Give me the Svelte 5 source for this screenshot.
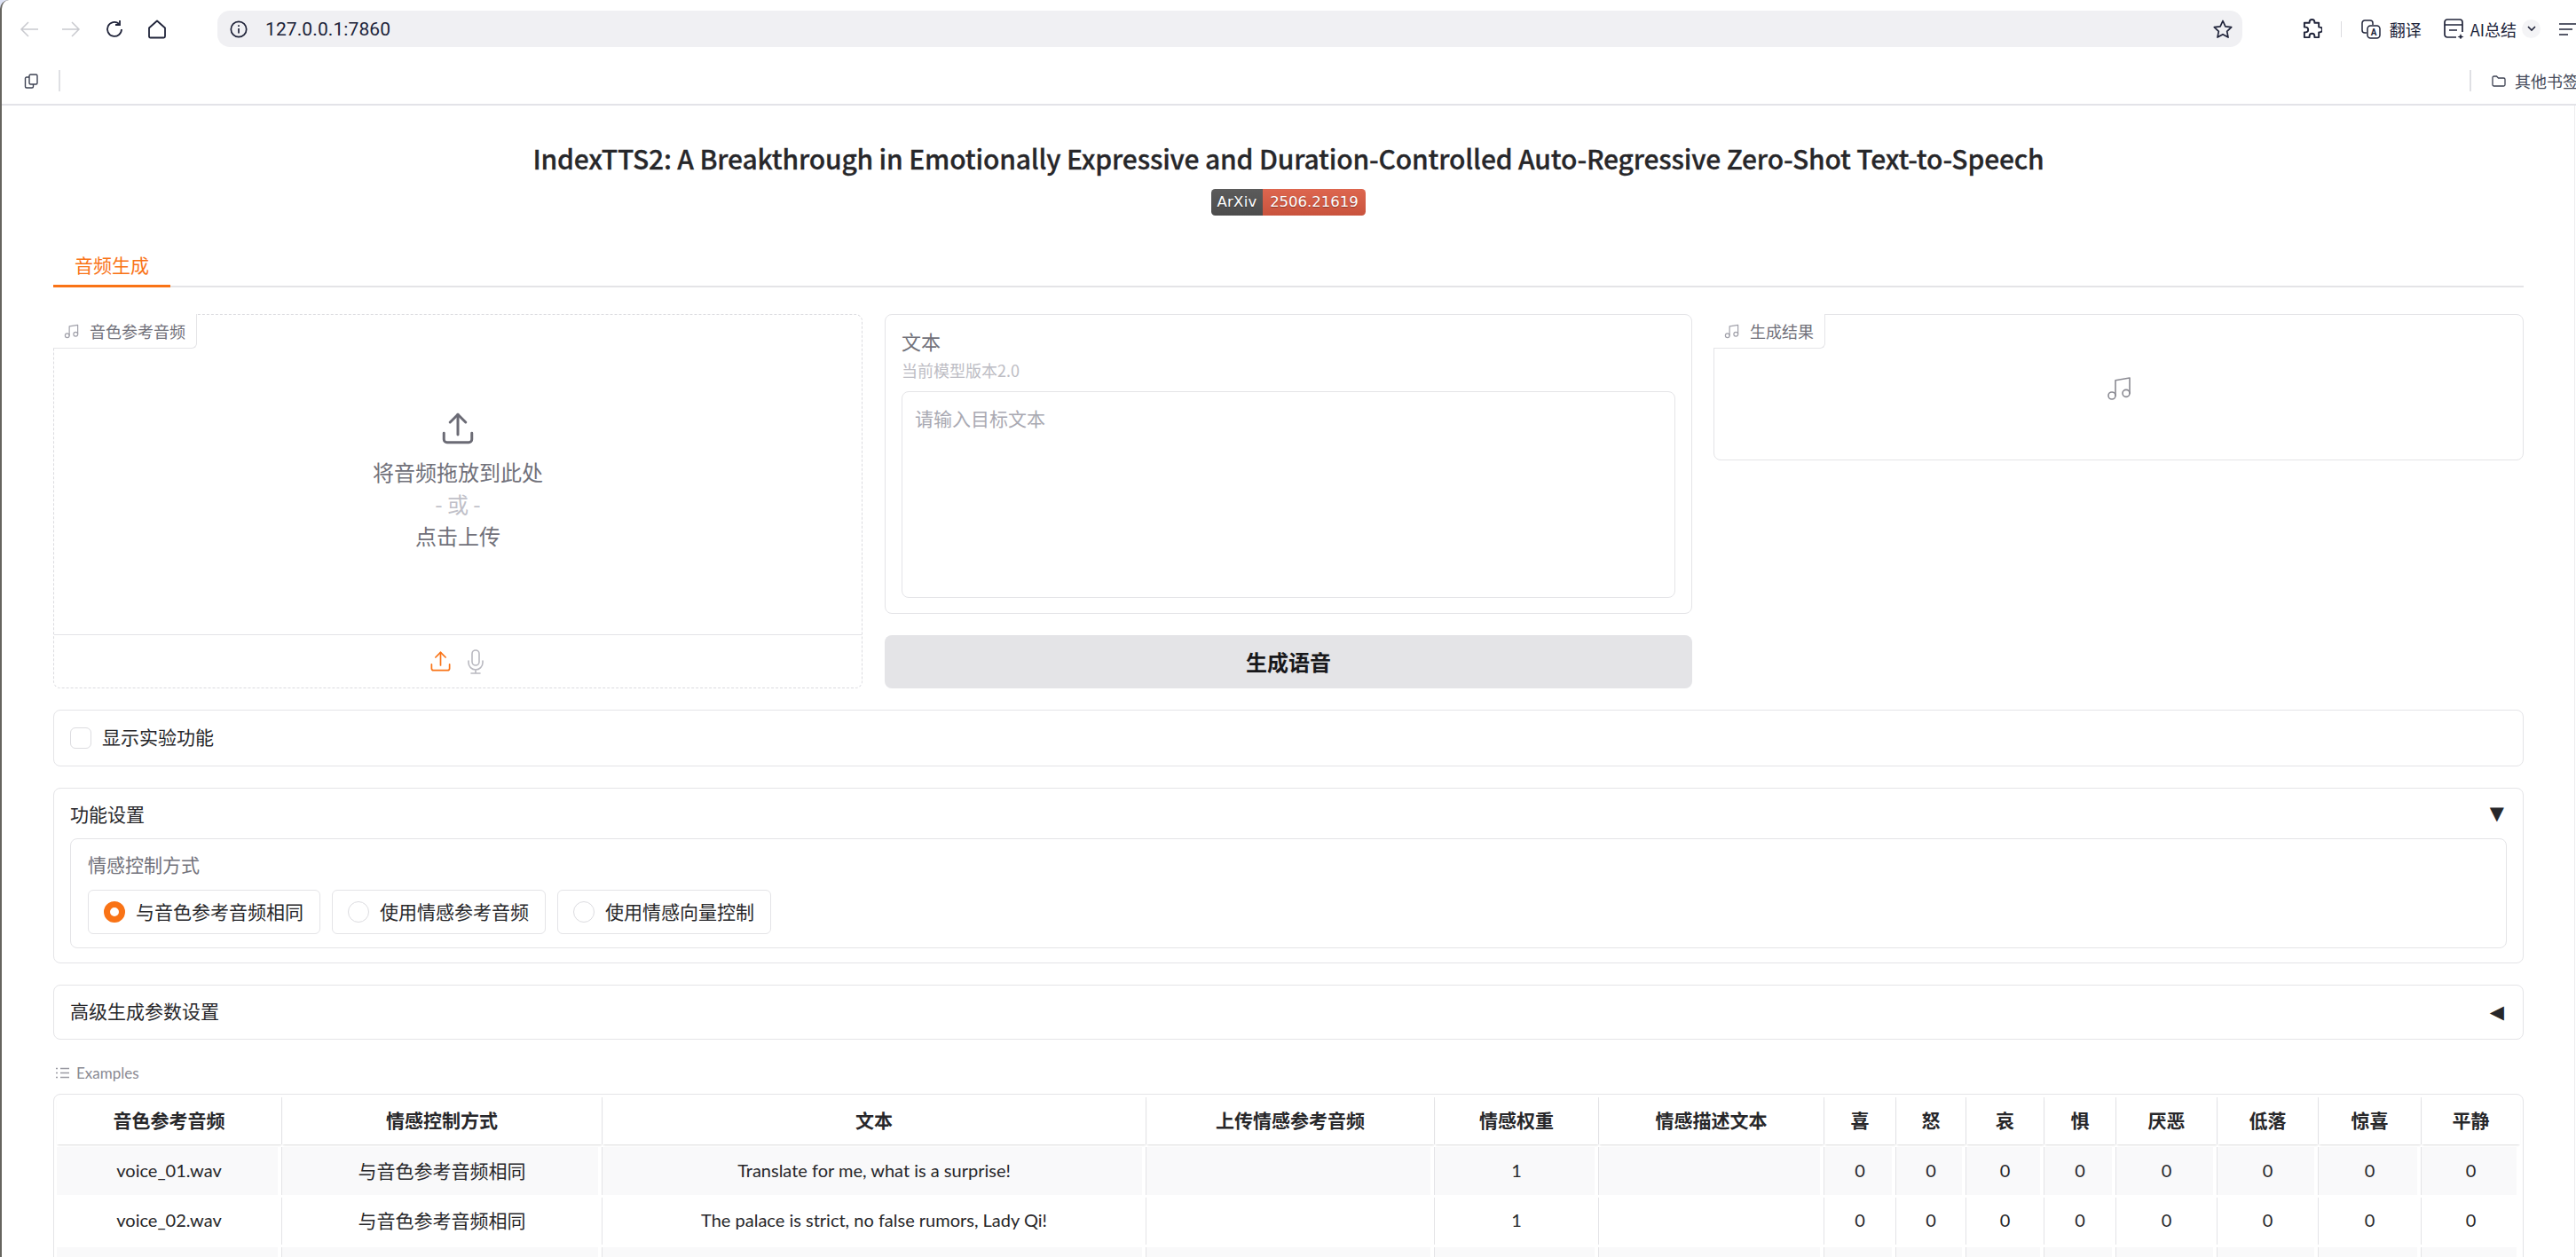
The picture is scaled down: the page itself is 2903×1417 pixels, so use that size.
<script>
  const columns = [
    { title: "音色参考音频", width: 254 },
    { title: "情感控制方式", width: 361 },
    { title: "文本", width: 613 },
    { title: "上传情感参考音频", width: 325 },
    { title: "情感权重", width: 185 },
    { title: "情感描述文本", width: 254 },
    { title: "喜", width: 81 },
    { title: "怒", width: 79 },
    { title: "哀", width: 88 },
    { title: "惧", width: 81 },
    { title: "厌恶", width: 114 },
    { title: "低落", width: 114 },
    { title: "惊喜", width: 116 },
    { title: "平静", width: 111 },
  ];

  const rows = [
    ["voice_01.wav", "与音色参考音频相同", "Translate for me, what is a surprise!", "", "1", "", "0", "0", "0", "0", "0", "0", "0", "0"],
    ["voice_02.wav", "与音色参考音频相同", "The palace is strict, no false rumors, Lady Qi!", "", "1", "", "0", "0", "0", "0", "0", "0", "0", "0"],
    ["", "", "", "", "", "", "", "", "", "", "", "", "", ""],
  ];

  const emotionModes = ["与音色参考音频相同", "使用情感参考音频", "使用情感向量控制"];
  let selectedMode = $state(0);
  let experimental = $state(false);
  let advancedOpen = $state(false);

  // latin cells are set a touch smaller than the chinese ones
  const isLatin = (value) => /^[\x00-\x7f]+$/.test(value);
</script>

{#snippet music(size, weight = 1.5)}
  <svg width={size} height={size} viewBox="0 0 24 24" fill="none" stroke="currentColor" stroke-width={weight} stroke-linecap="round" stroke-linejoin="round">
    <path d="M9 18V5l12-2v13" /><circle cx="6" cy="18" r="3" /><circle cx="18" cy="16" r="3" />
  </svg>
{/snippet}

{#snippet upload(size, weight)}
  <svg width={size} height={size} viewBox="0 0 24 24" fill="none" stroke="currentColor" stroke-width={weight} stroke-linecap="round" stroke-linejoin="round">
    <path d="M3 15v4a2 2 0 0 0 2 2h14a2 2 0 0 0 2-2v-4" /><path d="M7 8l5-5 5 5" /><path d="M12 3v13" />
  </svg>
{/snippet}

<div class="window">
  <header class="chrome">
    <div class="toolbar">
      <svg class="nav" width="22" height="22" viewBox="0 0 22 22" fill="none" stroke="#c9cacf" stroke-width="1.5"><path d="M21 11H2M10 3l-8 8 8 8" /></svg>
      <svg class="nav" width="22" height="22" viewBox="0 0 22 22" fill="none" stroke="#c9cacf" stroke-width="1.5"><path d="M1 11h19M12 3l8 8-8 8" /></svg>
      <svg class="nav reload" width="22" height="22" viewBox="0 0 22 22" fill="none" stroke="#20243a" stroke-width="1.8"><path d="M19 11a8 8 0 1 1-3-6.3" /><path d="M17 1v5h-5" /></svg>
      <svg class="nav home" width="22" height="22" viewBox="0 0 22 22" fill="none" stroke="#20243a" stroke-width="1.8" stroke-linejoin="round"><path d="M2 9.5 11 1.5l9 8V19a1.5 1.5 0 0 1-1.500 1.500H3.500A1.500 1.500 0 0 1 2 19z" /></svg>

      <div class="address">
        <svg width="20" height="20" viewBox="0 0 20 20" fill="none" stroke="#20243a" stroke-width="1.7"><circle cx="10" cy="10" r="8.700" /><path d="M10 9v5.500M10 5.200v1.800" /></svg>
        <span class="url">127.0.0.1:7860</span>
        <svg class="star" width="24" height="24" viewBox="0 0 24 24" fill="none" stroke="#20243a" stroke-width="1.700" stroke-linejoin="round"><path d="m12 2.500 2.900 6.300 6.800.8-5 4.700 1.300 6.800-6-3.400-6 3.400 1.300-6.800-5-4.700 6.800-.8z" /></svg>
      </div>

      <svg class="puzzle" width="23" height="23" viewBox="0 0 24 24" fill="none" stroke="#20243a" stroke-width="2" stroke-linejoin="round"><path d="M9 5V4a3 3 0 0 1 6 0v1h5v5h1a3 3 0 0 1 0 6h-1v6h-5v-1.500a3 3 0 0 0-6 0V22H3v-6h1.500a3 3 0 0 0 0-6H3V5z" /></svg>
      <span class="tool-sep"></span>
      <svg class="translate" width="22" height="22" viewBox="0 0 22 22" fill="none" stroke="#20243a" stroke-width="1.500">
        <path d="M6 15H4a3 3 0 0 1-3-3V4a3 3 0 0 1 3-3h6a3 3 0 0 1 3 3v2" />
        <rect x="7" y="7" width="14" height="14" rx="3.500" />
        <text x="14" y="18" text-anchor="middle" font-size="10" font-weight="700" fill="#20243a" stroke="none" font-family="Roboto, sans-serif">A</text>
      </svg>
      <span class="tool-text fanyi">翻译</span>
      <svg class="summary" width="23" height="23" viewBox="0 0 23 23" fill="none" stroke="#20243a" stroke-width="1.700"><path d="M14 21H4a3 3 0 0 1-3-3V4a3 3 0 0 1 3-3h14a3 3 0 0 1 3 3v11" /><path d="M1 7h20M6 13h9" /><path d="m19 17 1 2.500 2.500 1-2.500 1-1 2-1-2-2.500-1 2.500-1z" fill="#20243a" stroke="none" /></svg>
      <span class="tool-text ai">AI总结</span>
      <span class="chevron"><svg width="10" height="7" viewBox="0 0 10 7" fill="none" stroke="#20243a" stroke-width="1.600"><path d="m1 1 4 4 4-4" /></svg></span>
      <svg class="menu" width="19" height="14" viewBox="0 0 19 14" stroke="#20243a" stroke-width="1.500"><path d="M0 1h19M0 7h15M0 13h10" /></svg>
    </div>

    <div class="bookmarks">
      <svg class="tabs-icon" width="17" height="17" viewBox="0 0 17 17" fill="none" stroke="#3c4152" stroke-width="1.400"><rect x="6" y="1" width="9" height="11" rx="1.500" /><path d="M6 4H3a1.500 1.500 0 0 0-1.500 1.500v9A1.500 1.500 0 0 0 3 16h6a1.500 1.500 0 0 0 1.500-1.500V12" /></svg>
      <span class="mark-sep"></span>
      <span class="mark-sep right"></span>
      <svg class="folder" width="16" height="13" viewBox="0 0 16 13" fill="none" stroke="#3c4152" stroke-width="1.300"><path d="M1 2.500A1.500 1.500 0 0 1 2.500 1h3l2 2h6A1.500 1.500 0 0 1 15 4.500v6a1.500 1.500 0 0 1-1.500 1.500h-11A1.500 1.500 0 0 1 1 10.500z" /></svg>
      <span class="mark-text">其他书签</span>
    </div>
  </header>

  <main class="page">
    <h1>IndexTTS2: A Breakthrough in Emotionally Expressive and Duration-Controlled Auto-Regressive Zero-Shot Text-to-Speech</h1>
    <div class="badge-line">
      <span class="badge"><span class="badge-key">ArXiv</span><span class="badge-val">2506.21619</span></span>
    </div>

    <nav class="tabs">
      <button class="tab">音频生成</button>
    </nav>

    <section class="io-row">
      <div class="audio-in">
        <div class="block-label">{@render music(19)}<span>音色参考音频</span></div>
        <div class="drop">
          <span class="drop-icon">{@render upload(42, 1.7)}</span>
          <span>将音频拖放到此处</span>
          <span class="or">- 或 -</span>
          <span>点击上传</span>
        </div>
        <div class="source-bar">
          <span class="source active">{@render upload(27, 1.5)}</span>
          <span class="source">
            <svg width="24" height="28" viewBox="0 0 24 28" fill="none" stroke="currentColor" stroke-width="1.600" stroke-linecap="round"><rect x="8" y="1" width="8" height="17" rx="4" /><path d="M4 13v2a8 8 0 0 0 16 0v-2M12 23v4M7 27h10" /></svg>
          </span>
        </div>
      </div>

      <div class="text-col">
        <div class="text-panel">
          <div class="field-label">文本</div>
          <div class="field-info">当前模型版本2.0</div>
          <textarea placeholder="请输入目标文本"></textarea>
        </div>
        <button class="primary">生成语音</button>
      </div>

      <div class="audio-out">
        <div class="block-label">{@render music(19)}<span>生成结果</span></div>
        <div class="empty">{@render music(32, 1.2)}</div>
      </div>
    </section>

    <label class="panel check-row">
      <input type="checkbox" bind:checked={experimental} />
      <span class="nudge">显示实验功能</span>
    </label>

    <section class="panel accordion">
      <div class="acc-head"><span>功能设置</span><span class="caret">▼</span></div>
      <div class="inner">
        <div class="inner-label">情感控制方式</div>
        <div class="radios">
          {#each emotionModes as mode, i}
            <label class="radio">
              <input type="radio" name="emo" value={i} bind:group={selectedMode} />
              <span class="radio-text">{mode}</span>
            </label>
          {/each}
        </div>
      </div>
    </section>

    <button class="panel acc-closed" onclick={() => (advancedOpen = !advancedOpen)}>
      <span class="nudge">高级生成参数设置</span><span class="caret">◀</span>
    </button>

    <div class="examples-label">
      <svg width="15" height="13" viewBox="0 0 15 13" stroke="#9a9aa2" stroke-width="1.400"><path d="M0 1.500h2M0 6.500h2M0 11.500h2M5 1.500h10M5 6.500h10M5 11.500h10" /></svg>
      <span>Examples</span>
    </div>

    <div class="table-wrap">
      <table>
        <colgroup>
          {#each columns as col}
            <col style="width: {col.width}px" />
          {/each}
        </colgroup>
        <thead>
          <tr>
            {#each columns as col}
              <th>{col.title}</th>
            {/each}
          </tr>
        </thead>
        <tbody>
          {#each rows as row}
            <tr>
              {#each row as value}
                <td><div class="cell" class:latin={isLatin(value)}>{value}</div></td>
              {/each}
            </tr>
          {/each}
        </tbody>
      </table>
    </div>
  </main>
</div>

<style>
  :global(body) {
    margin: 0;
    background: #dfe4f6;
  }

  .window {
    box-sizing: border-box;
    height: 1417px;
    overflow: hidden;
    background: #fff;
    border-left: 2px solid #66645f;
    border-top-left-radius: 10px;
    color: #27272a;
    font-family: "Noto Sans CJK SC", "Noto Sans", sans-serif;
    font-size: 21px;
  }

  .chrome {
    box-sizing: border-box;
    height: 119px;
    border-bottom: 2px solid #e3e3e8;
    font-family: "Noto Sans CJK SC", Roboto, sans-serif;
  }

  .toolbar {
    display: flex;
    align-items: center;
    height: 65px;
    padding-left: 20px;
    white-space: nowrap;
    overflow: hidden;
  }

  .nav {
    flex: none;
    margin-right: 25px;
  }

  .reload {
    margin-left: 2px;
  }

  .home {
    margin-left: 1px;
    margin-right: 0;
  }

  .address {
    flex: 1;
    display: flex;
    align-items: center;
    height: 41px;
    margin-left: 57px;
    padding: 0 10px 0 14px;
    background: #f0f0f3;
    border-radius: 14px;
  }

  .url {
    margin-left: 20px;
    font-family: Roboto, sans-serif;
    font-size: 21px;
    letter-spacing: 0.1px;
    color: #20243a;
  }

  .star {
    margin-left: auto;
  }

  .puzzle {
    flex: none;
    margin-left: 67px;
  }

  .tool-sep {
    flex: none;
    width: 1px;
    height: 18px;
    margin: 0 22px 0 21px;
    background: #dcdce0;
  }

  .translate,
  .summary,
  .menu,
  .chevron {
    flex: none;
  }

  .tool-text {
    flex: none;
    font-size: 18px;
    color: #20243a;
  }

  .fanyi {
    margin-left: 10px;
    margin-right: 25px;
  }

  .ai {
    margin-left: 7px;
  }

  .chevron {
    display: grid;
    place-items: center;
    width: 21px;
    height: 21px;
    margin-left: 6px;
    border-radius: 50%;
    background: #f4f4f6;
  }

  .menu {
    margin-left: 21px;
  }

  .bookmarks {
    display: flex;
    align-items: center;
    height: 52px;
    padding-left: 25px;
    overflow: hidden;
    white-space: nowrap;
  }

  .mark-sep {
    flex: none;
    width: 2px;
    height: 24px;
    margin-left: 22px;
    background: #dfe0e4;
  }

  .mark-sep.right {
    margin-left: auto;
  }

  .folder {
    flex: none;
    margin-left: 23px;
  }

  .mark-text {
    flex: none;
    width: 69px;
    margin-left: 10px;
    overflow: hidden;
    font-size: 18px;
    color: #454a5a;
  }

  .page {
    box-sizing: border-box;
    min-height: 1298px;
    margin-right: 1px;
    padding: 39px 57px 0 58px;
    border-right: 1px solid #ececee;
  }

  h1 {
    margin: 0;
    font-size: 30px;
    line-height: 40px;
    font-weight: 500;
    letter-spacing: -0.17px;
    -webkit-text-stroke: 0.3px #27272a;
    text-align: center;
    white-space: nowrap;
  }

  .badge-line {
    display: flex;
    justify-content: center;
    margin-top: 15px;
  }

  .badge {
    display: flex;
    height: 30px;
    border-radius: 4.5px;
    overflow: hidden;
    font-family: "DejaVu Sans", sans-serif;
    font-size: 16.5px;
    line-height: 30px;
    color: #fff;
    text-shadow: 0 1px 1px rgba(0, 0, 0, 0.35);
  }

  .badge-key {
    width: 58px;
    letter-spacing: 0.3px;
    text-align: center;
    background: linear-gradient(#5b5b5b, #4c4c4c);
  }

  .badge-val {
    width: 116px;
    text-align: center;
    background: linear-gradient(#dd664f, #c9533d);
  }

  .tabs {
    display: flex;
    height: 47px;
    margin-top: 34px;
    box-shadow: inset 0 -2px #e4e4e7;
  }

  .tab {
    box-sizing: border-box;
    height: 47px;
    padding: 0 24px 2px;
    border: 0;
    border-bottom: 3px solid #f97316;
    background: none;
    color: #f97316;
    font: inherit;
  }

  .io-row {
    display: grid;
    grid-template-columns: repeat(3, 1fr);
    gap: 24px;
    height: 422px;
    margin-top: 30px;
  }

  .audio-in {
    position: relative;
    display: flex;
    flex-direction: column;
    border: 1px dashed #dcdce0;
    border-radius: 8px;
  }

  .block-label {
    position: absolute;
    top: -1px;
    left: -1px;
    box-sizing: border-box;
    display: flex;
    align-items: center;
    gap: 11px;
    height: 39px;
    padding: 0 12px 0 11px;
    background: #fff;
    border: 1px solid #e4e4e7;
    border-top: 0;
    border-left: 0;
    border-radius: 0 0 6px 0;
    color: #71717a;
    font-size: 18px;
  }

  .block-label svg {
    color: #a1a1aa;
  }

  .drop {
    flex: 1;
    display: flex;
    flex-direction: column;
    align-items: center;
    justify-content: center;
    padding-top: 14px;
    color: #71717a;
    font-size: 24px;
    line-height: 36px;
  }

  .drop-icon {
    display: block;
    height: 42px;
    margin-bottom: 10px;
    color: #6b6b75;
  }

  .or {
    color: #c0c0c8;
  }

  .source-bar {
    box-sizing: border-box;
    display: flex;
    align-items: center;
    justify-content: center;
    gap: 14px;
    height: 60px;
    padding-right: 2px;
    border-top: 1px solid #e4e4e7;
  }

  .source {
    display: block;
    height: 28px;
    color: #b9b9c0;
  }

  .source.active {
    height: 27px;
    color: #f97316;
  }

  .text-col {
    display: flex;
    flex-direction: column;
    gap: 24px;
    margin: 0 1px;
  }

  .text-panel {
    flex: 1;
    display: flex;
    flex-direction: column;
    padding: 15px 18px 17px;
    border: 1px solid #e4e4e7;
    border-radius: 8px;
  }

  .field-label {
    color: #71717a;
    font-size: 22px;
    line-height: 28px;
  }

  .field-info {
    margin-top: 7px;
    color: #bdbdc4;
    font-size: 18px;
    line-height: 24px;
  }

  textarea {
    flex: 1;
    margin-top: 12px;
    padding: 14px;
    border: 1px solid #e4e4e7;
    border-radius: 8px;
    outline: none;
    resize: none;
    font: inherit;
    line-height: 30px;
  }

  textarea::placeholder {
    color: #a9a9b2;
  }

  .primary {
    height: 60px;
    padding-bottom: 2px;
    border: 0;
    border-radius: 8px;
    background: #e4e4e7;
    color: #18181b;
    font: inherit;
    font-size: 24px;
    font-weight: 700;
  }

  .audio-out {
    position: relative;
    align-self: start;
    box-sizing: border-box;
    height: 165px;
    margin-left: -1px;
    border: 1px solid #e4e4e7;
    border-radius: 8px;
  }

  .empty {
    display: flex;
    justify-content: center;
    padding-top: 67px;
    color: #8a8a92;
  }

  .panel {
    box-sizing: border-box;
    border: 1px solid #e4e4e7;
    border-radius: 8px;
  }

  .nudge {
    padding-bottom: 4px;
  }

  .radio-text {
    padding-bottom: 2px;
  }

  .check-row {
    display: flex;
    align-items: center;
    gap: 12px;
    height: 64px;
    margin-top: 24px;
    padding: 0 18px;
  }

  input[type="checkbox"] {
    appearance: none;
    flex: none;
    width: 24px;
    height: 24px;
    margin: 0;
    border: 1px solid #dcdce0;
    border-radius: 6px;
    background: #fff;
  }

  .accordion {
    height: 198px;
    margin-top: 24px;
    padding: 0 18px;
  }

  .acc-head {
    display: flex;
    align-items: center;
    justify-content: space-between;
    height: 56px;
  }

  .caret {
    margin-right: 3px;
    font-family: "DejaVu Sans", sans-serif;
    font-size: 21px;
    color: #27272a;
  }

  .inner {
    box-sizing: border-box;
    height: 124px;
    padding: 13px 19px 0;
    border: 1px solid #e4e4e7;
    border-radius: 8px;
  }

  .inner-label {
    color: #71717a;
    line-height: 30px;
  }

  .radios {
    display: flex;
    gap: 13px;
    margin-top: 14px;
  }

  .radio {
    box-sizing: border-box;
    display: flex;
    align-items: center;
    gap: 12px;
    height: 50px;
    padding: 0 18px 0 17px;
    border: 1px solid #e4e4e7;
    border-radius: 6px;
  }

  input[type="radio"] {
    appearance: none;
    box-sizing: border-box;
    width: 24px;
    height: 24px;
    margin: 0;
    border: 1px solid #dcdce0;
    border-radius: 50%;
    background: #fff;
  }

  input[type="radio"]:checked {
    border: 7px solid #f97316;
  }

  .acc-closed {
    display: flex;
    align-items: center;
    justify-content: space-between;
    width: 100%;
    height: 62px;
    margin-top: 24px;
    padding: 0 18px;
    background: #fff;
    color: inherit;
    font: inherit;
  }

  .examples-label {
    display: flex;
    align-items: center;
    gap: 8px;
    height: 24px;
    margin-top: 25px;
    padding-left: 3px;
    color: #8a8a92;
    font-size: 17px;
    font-family: Lato, sans-serif;
  }

  .table-wrap {
    margin-top: 12px;
    padding: 3px;
    border: 1px solid #e4e4e7;
    border-radius: 8px;
  }

  table {
    width: 2776px;
    margin-top: -3px;
    table-layout: fixed;
    border-collapse: separate;
    border-spacing: 0 3px;
  }

  th {
    box-sizing: border-box;
    height: 53px;
    padding: 0 0 4px;
    border-right: 1px solid #e4e4e7;
    box-shadow: 0 2px 2px -1px rgba(0, 0, 0, 0.14);
    font-weight: 700;
  }

  td {
    height: 53.5px;
    padding: 0 4px 0 0;
    border-right: 1px solid #e4e4e7;
  }

  th:last-child,
  td:last-child {
    border-right: 0;
  }

  .cell {
    box-sizing: border-box;
    display: grid;
    place-items: center;
    height: 53.5px;
    padding: 0 0 2px 4px;
    white-space: nowrap;
    overflow: hidden;
  }

  .cell.latin {
    font-family: Lato, "Noto Sans CJK SC", sans-serif;
    font-size: 20px;
  }

  tbody tr:nth-child(odd) .cell {
    background: #f9f9fa;
  }
</style>
